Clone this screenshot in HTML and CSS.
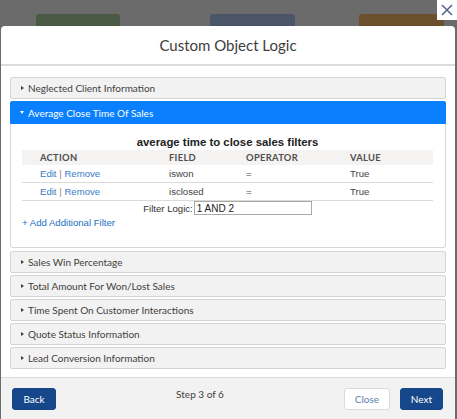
FILE: index.html
```html
<!DOCTYPE html>
<html lang="en">
<head>
    <meta charset="UTF-8">
    <meta name="viewport" content="width=device-width, initial-scale=1.0">
    <title>Custom Object Logic</title>
    <link rel="stylesheet" href="styles.css">
</head>
<body>
    <div class="backdrop">
        <div class="tile tile-green"></div>
        <div class="tile tile-blue"></div>
        <div class="tile tile-brown"></div>
    </div>

    <button class="modal-close" title="Close">
        <svg width="12" height="12" viewBox="0 0 12 12">
            <path d="M1 1 L11 11 M11 1 L1 11" stroke="#54698d" stroke-width="1.6" fill="none"/>
        </svg>
    </button>

    <div class="modal">
        <div class="modal-header">
            <h2>Custom Object Logic</h2>
        </div>

        <div class="modal-body">
            <div class="section">
                <div class="section-title"><span class="caret"></span>Neglected Client Information</div>
            </div>

            <div class="section open">
                <div class="section-title"><span class="caret"></span>Average Close Time Of Sales</div>
                <div class="section-content">
                    <h3 class="filter-title">average time to close sales filters</h3>
                    <table class="filter-table">
                        <thead>
                            <tr>
                                <th class="col-action">Action</th>
                                <th class="col-field">Field</th>
                                <th class="col-operator">Operator</th>
                                <th>Value</th>
                            </tr>
                        </thead>
                        <tbody>
                            <tr>
                                <td><a href="#">Edit</a> <span class="sep">|</span> <a href="#">Remove</a></td>
                                <td>iswon</td>
                                <td>=</td>
                                <td>True</td>
                            </tr>
                            <tr>
                                <td><a href="#">Edit</a> <span class="sep">|</span> <a href="#">Remove</a></td>
                                <td>isclosed</td>
                                <td>=</td>
                                <td>True</td>
                            </tr>
                        </tbody>
                    </table>
                    <div class="filter-logic">
                        <label for="filter-logic">Filter Logic:</label>
                        <input type="text" id="filter-logic" value="1 AND 2">
                    </div>
                    <a href="#" class="add-filter">+ Add Additional Filter</a>
                </div>
            </div>

            <div class="section">
                <div class="section-title"><span class="caret"></span>Sales Win Percentage</div>
            </div>
            <div class="section">
                <div class="section-title"><span class="caret"></span>Total Amount For Won/Lost Sales</div>
            </div>
            <div class="section">
                <div class="section-title"><span class="caret"></span>Time Spent On Customer Interactions</div>
            </div>
            <div class="section">
                <div class="section-title"><span class="caret"></span>Quote Status Information</div>
            </div>
            <div class="section">
                <div class="section-title"><span class="caret"></span>Lead Conversion Information</div>
            </div>
        </div>

        <div class="modal-footer">
            <button class="btn btn-brand btn-back">Back</button>
            <span class="step">Step 3 of 6</span>
            <div class="footer-right">
                <button class="btn btn-neutral">Close</button>
                <button class="btn btn-brand btn-next">Next</button>
            </div>
        </div>
    </div>
</body>
</html>
```

FILE: styles.css
```css
body {
    margin: 0;
    height: 419px;
    overflow: hidden;
    background-color: #6b6b6b;
    font-family: Lato, "Noto Sans", sans-serif;
    color: #3e3e3c;
}
.backdrop {
    display: flex;
    padding-top: 14px;
}
.tile {
    width: 85px;
    height: 30px;
    border-radius: 3px;
}
.tile-green {
    margin-left: 36px;
    width: 84px;
    background-color: #4b5a44;
}
.tile-blue {
    margin-left: 90px;
    background-color: #4a5568;
}
.tile-brown {
    margin-left: 64px;
    background-color: #6c4f2c;
}
.modal-close {
    position: absolute;
    top: 0;
    right: 0;
    width: 20px;
    height: 20px;
    padding: 0;
    border: none;
    background-color: white;
    display: flex;
    align-items: center;
    justify-content: center;
}
.modal {
    position: absolute;
    left: 1px;
    top: 26px;
    bottom: 0;
    width: 454px;
    background-color: white;
    border-radius: 4px 4px 0 0;
    display: flex;
    flex-direction: column;
}
.modal-header {
    height: 38px;
    flex-shrink: 0;
    border-bottom: 2px solid #dddbda;
    display: flex;
    align-items: center;
    justify-content: center;
}
.modal-header h2 {
    margin: 0;
    font-size: 15px;
    font-weight: normal;
}
.modal-body {
    flex: 1;
    padding: 11px 9px 0;
}
.section {
    margin-bottom: 2px;
}
.section-title {
    height: 20px;
    display: flex;
    align-items: center;
    padding-left: 10px;
    border: 1px solid #d4d4d4;
    border-radius: 2px;
    background-color: #f3f2f2;
    font-size: 10px;
}
.caret {
    width: 0;
    height: 0;
    margin-right: 4px;
    border-top: 2.5px solid transparent;
    border-bottom: 2.5px solid transparent;
    border-left: 3px solid #3e3e3c;
}
.section.open {
    margin-bottom: 3px;
}
.section.open .section-title {
    height: 21px;
    border-color: #0a80ff;
    border-radius: 2px 2px 0 0;
    background-color: #0a80ff;
    color: white;
}
.section.open .caret {
    border-left: 2.5px solid transparent;
    border-right: 2.5px solid transparent;
    border-top: 3px solid white;
    border-bottom: none;
    margin-left: -1px;
}
.section-content {
    box-sizing: border-box;
    height: 124px;
    padding: 11px 12px 0 11px;
    border: 1px solid #d8d8d8;
    border-top: none;
    border-radius: 0 0 3px 3px;
    font-family: "Liberation Sans", Arial, sans-serif;
    font-size: 9.6px;
}
.filter-title {
    margin: 0 0 1px;
    line-height: 14px;
    text-align: center;
    font-size: 11.4px;
    color: #222;
}
.filter-table {
    width: 100%;
    border-collapse: collapse;
}
.filter-table th {
    height: 15px;
    padding: 0 0 0 18px;
    text-align: left;
    text-transform: uppercase;
    font-family: Lato, "Noto Sans", sans-serif;
    font-size: 9.4px;
    letter-spacing: 0.3px;
    color: #514f4d;
    background-color: #f4f3f2;
}
.col-action {
    width: 111px;
}
.col-field {
    width: 59px;
}
.col-operator {
    width: 86px;
}
.filter-table td {
    height: 17px;
    padding: 0 0 0 18px;
    border-bottom: 1px solid #dddbda;
    color: #444;
}
.filter-table a {
    color: #3a7cc6;
    text-decoration: none;
}
.sep {
    color: #b87b7b;
}
.filter-logic {
    display: flex;
    justify-content: center;
    align-items: center;
    color: #333;
}
.filter-logic input {
    box-sizing: border-box;
    width: 118px;
    height: 14px;
    margin-left: 1px;
    padding: 0 2px;
    border: 1px solid #a9a9a9;
    font-family: "Liberation Sans", Arial, sans-serif;
    font-size: 10px;
    color: #222;
}
.add-filter {
    display: inline-block;
    margin-top: 2px;
    color: #1a6fc4;
    text-decoration: none;
}
.modal-footer {
    flex-shrink: 0;
    height: 41px;
    padding: 0 12px 0 11px;
    border-top: 1px solid #dddbda;
    background-color: #f3f2f2;
    display: flex;
    justify-content: space-between;
    align-items: flex-start;
}
.step {
    margin-top: 10px;
    font-size: 10px;
}
.footer-right {
    display: flex;
    gap: 10px;
}
.btn {
    height: 22px;
    margin-top: 10px;
    padding: 0;
    width: 46px;
    border-radius: 3px;
    font-family: Lato, "Noto Sans", sans-serif;
    font-size: 10px;
    cursor: pointer;
}
.btn-back {
    width: 44px;
}
.btn-next {
    width: 43px;
}
.btn-brand {
    border: 1px solid #16478a;
    background-color: #16478a;
    color: white;
}
.btn-neutral {
    border: 1px solid #dddbda;
    background-color: white;
    color: #5a7fae;
}
```
